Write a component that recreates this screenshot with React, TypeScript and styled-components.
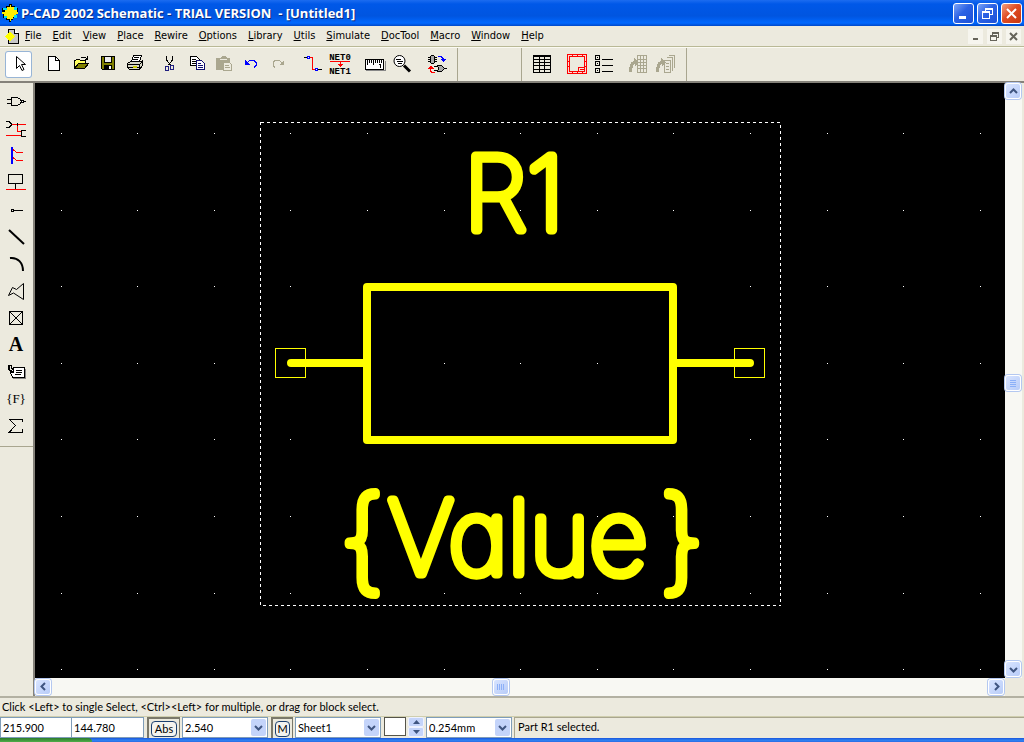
import React from "react";
import styled, { createGlobalStyle, css } from "styled-components";

const face = "#eceade";
const line = "#a9a68f";
const yellow = "#ffff00";
const uiFont = `"DejaVu Sans Condensed", "DejaVu Sans", sans-serif`;
const statusFont = `Lato, "Liberation Sans", sans-serif`;

const GlobalStyle = createGlobalStyle`
  * { box-sizing: border-box; }
  html, body { margin: 0; height: 100%; }
  body { overflow: hidden; background: ${face}; font: 11px/14px ${uiFont}; color: #000; }
  button, input, select { font: inherit; color: inherit; margin: 0; padding: 0; }
`;

const Window = styled.div`
  display: flex;
  flex-direction: column;
  height: 100vh;
  background: ${face};
`;

/* Title bar */

const TitleBar = styled.header`
  display: flex;
  align-items: center;
  flex: none;
  height: 26px;
  padding: 0 2px 0 2px;
  gap: 3px;
  background: linear-gradient(#1c6cf0 0, #0058e8 4px, #0055e0 16px, #0068ff 23px, #0048c8 26px);
`;

const Title = styled.h1`
  flex: 1;
  margin: 0;
  font: bold 13px/20px "Open Sans", sans-serif;
  color: #fff;
  white-space: pre;
  text-shadow: 1px 1px 0 #0a2a80;
`;

const CaptionButton = styled.button<{ $close?: boolean }>`
  display: grid;
  place-items: center;
  width: 21px;
  height: 21px;
  border: 1px solid #fff;
  border-radius: 3px;
  background: ${(p) =>
    p.$close
      ? "linear-gradient(135deg, #f0a080, #e04c24 45%, #c83810)"
      : "linear-gradient(135deg, #7ca4f8, #2c62e4 45%, #1c50d8)"};
`;

/* Menu bar */

const MenuBar = styled.nav`
  display: flex;
  align-items: center;
  flex: none;
  height: 21px;
  padding: 0 3px 0 5px;
  border-bottom: 1px solid #b9b996;
`;

const MenuItems = styled.div`
  display: flex;
  flex: 1;
  gap: 11px;
  padding-left: 5px;
`;

const MenuItem = styled.button`
  border: 0;
  background: none;
  font: 11px/18px ${uiFont};
`;

const AccessKey = styled.u`
  text-decoration: underline;
  text-underline-offset: 1px;
`;

const ChildButtons = styled.div`
  display: flex;
  gap: 4px;
`;

const ChildButton = styled.button`
  display: grid;
  place-items: center;
  width: 15px;
  height: 15px;
  border: 0;
  background: #f6f5ee;
`;

/* Tool bars */

const ToolBar = styled.div`
  display: flex;
  flex: none;
  height: 36px;
  border-top: 1px solid #fbfaf2;
  border-bottom: 2px solid #85827a;
`;

const ToolSection = styled.div<{ $pad?: string }>`
  display: flex;
  align-items: center;
  gap: 8px;
  min-width: 64px;
  padding: ${(p) => p.$pad ?? "0"};
  border-right: 1px solid ${line};
`;

const ToolGroup = styled.div`
  display: flex;
`;

const ToolButton = styled.button<{ $on?: boolean }>`
  width: 27px;
  height: 27px;
  border: 0;
  background: none;
  ${(p) =>
    p.$on &&
    css`
      background: #fff;
      border-radius: 3px;
      box-shadow: inset 0 0 0 1px #98b5d6;
    `}
  svg { display: block; }
`;

const Workspace = styled.main`
  display: flex;
  flex: 1;
  min-height: 0;
`;

const SideBar = styled.aside`
  flex: none;
  width: 35px;
  border-right: 2px solid #85827a;
`;

const SideTools = styled.div`
  display: flex;
  flex-direction: column;
  align-items: flex-start;
  padding: 5px 0 7px 3px;
  border-bottom: 1px solid ${line};
`;

/* Drawing area */

const Sheet = styled.section`
  display: grid;
  flex: 1;
  min-width: 0;
  grid-template-columns: minmax(0, 1fr) 17px;
  grid-template-rows: minmax(0, 1fr) 18px;
  padding-right: 2px;
`;

const Drawing = styled.svg`
  display: block;
  width: 100%;
  height: 100%;
  background: #000;
`;

const DrawnText = styled.text<{ $size: number }>`
  font-family: Inter, Lato, sans-serif;
  font-size: ${(p) => p.$size}px;
  font-weight: 100;
  font-feature-settings: "cv11", "calt" 0;
  fill: ${yellow};
  stroke: ${yellow};
  stroke-width: 9px;
  stroke-linejoin: round;
  stroke-linecap: round;
  text-anchor: middle;
`;

const ScrollBar = styled.div<{ $vertical?: boolean }>`
  display: flex;
  flex-direction: ${(p) => (p.$vertical ? "column" : "row")};
  align-items: center;
  justify-content: space-between;
  padding: 0 1px 1px 0;
  background: #f8f8f3;
`;

const ScrollButton = styled.button`
  display: grid;
  place-items: center;
  flex: none;
  width: 16px;
  height: 16px;
  border: 1px solid #fff;
  border-radius: 3px;
  background: linear-gradient(135deg, #d8e4ff, #b8ccf8);
  box-shadow: 0 0 0 1px #b4c8f0;
`;

const TrackPart = styled.div<{ $share: number }>`
  flex: ${(p) => p.$share} 1 0;
`;

/* Status area */

const Hint = styled.p`
  flex: none;
  height: 21px;
  margin: 0;
  padding: 1px 2px 0;
  border-top: 2px solid #b3b1a2;
  border-bottom: 1px solid #cfceae;
  font: 11px/16px ${statusFont};
`;

const StatusBar = styled.footer`
  display: flex;
  flex: none;
  height: 21px;
  font: 11px/15px ${statusFont};
`;

const Coordinate = styled.input`
  width: 72px;
  border: 1px solid #7f9db9;
  background: #fff;
  padding-left: 2px;
  & + & { border-left: 0; }
`;

const ToggleFrame = styled.div`
  display: flex;
  margin: 0 2px 0 3px;
  padding: 2px 2px 0;
  border: solid #7a786a;
  border-width: 2px 1px 0 2px;
`;

const ToggleButton = styled.button<{ $wide?: boolean }>`
  width: ${(p) => (p.$wide ? 26 : 15)}px;
  height: 16px;
  border: 1px solid #1c4070;
  border-radius: 4px;
  background: #f4f3ee;
  line-height: 14px;
`;

const Combo = styled.div`
  display: grid;
  width: 86px;
  border: 1px solid #7f9db9;
  background: #fff;
  & > * { grid-area: 1 / 1; }
`;

const Select = styled.select`
  appearance: none;
  border: 0;
  padding-left: 2px;
  background: none;
`;

const ComboArrow = styled.span`
  display: grid;
  place-items: center;
  justify-self: end;
  width: 15px;
  margin: 1px;
  border-radius: 2px;
  background: #c4d4fa;
  pointer-events: none;
`;

const Swatch = styled.button`
  width: 22px;
  height: 19px;
  margin: 0 2px 0 3px;
  border: 1px solid #55544a;
  background: #fff;
`;

const Spinner = styled.div`
  display: flex;
  flex-direction: column;
  margin: 0 2px 1px 0;
`;

const SpinButton = styled.button`
  display: grid;
  place-items: center;
  width: 16px;
  height: 10px;
  border: 1px solid #eef2ff;
  border-radius: 2px;
  background: #c4d4fa;
`;

const Message = styled.output`
  flex: 1;
  margin-left: 2px;
  padding: 1px 3px 0;
  border: solid ${line};
  border-width: 1px 0 0 1px;
`;

const TaskBar = styled.div`
  display: flex;
  flex: none;
  height: 4px;
  background: linear-gradient(#1f5fe0 0, #1f5fe0 1px, #2f86f4 2px, #2a6ce4 4px);
`;

const StartEdge = styled.div`
  width: 92px;
  border-top-right-radius: 4px;
  background: linear-gradient(#2c7a2c, #4fae4a);
`;

/* Icons */

type IconProps = { children: React.ReactNode; size?: number; smooth?: boolean };

const Icon = ({ children, size = 27, smooth }: IconProps) => (
  <svg
    width={size}
    height={size}
    viewBox={`0 0 ${size} ${size}`}
    fill="none"
    stroke="#000"
    shapeRendering={smooth ? "auto" : "crispEdges"}
    aria-hidden="true"
  >
    {children}
  </svg>
);

const Chevron = ({ turn = 0 }: { turn?: number }) => (
  <Icon size={9} smooth>
    <path d="M1 3L4.500 6.500L8 3" stroke="#3f5580" strokeWidth="2" transform={`rotate(${turn} 4.500 4.500)`} />
  </Icon>
);

const SmallArrow = ({ up }: { up?: boolean }) => (
  <svg width="7" height="4" viewBox="0 0 7 4" aria-hidden="true">
    <path d={up ? "M0 4L3.500 0L7 4z" : "M0 0L3.500 4L7 0z"} fill="#3f5580" />
  </svg>
);

const AppLogo = () => (
  <svg width="16" height="20" viewBox="0 0 16 20" shapeRendering="crispEdges" aria-hidden="true">
    <path d="M7 1h3v2h3v2h3v6h-2v4h-3v2H9v2H7v-2H4v-2H1v-4h1V9H0V5h4V3h3z" fill="#000" />
    <path d="M8 2h1v2h3v3h3v2h2v2h-3v3h-3v2H9v2H8v-2H5v-3H2v-2H0V9h3V6h2V4h3z" fill="#ffee00" />
    <path d="M1 5h4v2H1zM12 4h3v3h-3zM2 13h3v2H2zM12 12h3v3h-3z" fill="#00e0f0" />
  </svg>
);

const DocLogo = () => (
  <svg width="15" height="15" viewBox="0 0 15 15" shapeRendering="crispEdges" aria-hidden="true">
    <path d="M3.500 .5h6l4 4v10h-10z" fill="#c8c8c8" stroke="#000" />
    <path d="M9.500 .5v4h4" fill="#fff" stroke="#000" />
    <path d="M4.500 2.500l5 5-5 5-5-5z" fill="#ffff00" />
  </svg>
);

const icons = {
  select: <Icon smooth><path d="M11.500 5.500v12l3-3 2.500 5 2-1-2.500-5h4z" fill="#fff" /></Icon>,
  create: <Icon><path d="M8.500 5.500h7l4 4v10h-11z" fill="#fff" /><path d="M15.500 5.500v4h4" /></Icon>,
  open: (
    <Icon>
      <path d="M7.500 17.500v-8h1l1-1h3l1 1h5v3" fill="#ffff60" />
      <path d="M7.500 17.500l4-5h10l-4 5z" fill="#808000" />
      <path d="M14 7l2-1h2l2 2M20.500 5v4M18 8.500h3" />
    </Icon>
  ),
  save: (
    <Icon>
      <path d="M7.500 5.500h13v13h-12l-1-1z" fill="#808000" />
      <path d="M10.500 5.500h7v6h-7z" fill="#eee" />
      <path d="M10 14h8v5h-8z" fill="#000" stroke="none" />
      <path d="M15 15h2v3h-2z" fill="#fff" stroke="none" />
    </Icon>
  ),
  print: (
    <Icon>
      <path d="M10.500 10.500l2-6h8l-2 6z" fill="#fff" />
      <path d="M13 6.500h5M12 8.500h5" />
      <path d="M6.500 12.500l3-2h11l1-1v5l-3 4h-10l-2-2z" fill="#d8d8c8" />
      <path d="M6.500 13.500h12l3-3M18.500 13.500v4M7 16.500h11" />
      <path d="M12 15h3v1h-3z" stroke="#cccc00" />
    </Icon>
  ),
  cut: (
    <Icon>
      <path d="M10.500 5v4l4 5M16.500 5v4l-4 5" />
      <path d="M9.500 15.500h3v4h-3zM14.500 14.500h3v4h-3z" stroke="#202080" />
    </Icon>
  ),
  copy: (
    <Icon>
      <path d="M7.500 5.500h6l3 3v6h-9z" fill="#fff" />
      <path d="M9 8.500h4M9 10.500h5M9 12.500h5" />
      <path d="M13.500 9.500h5l3 3v6h-8z" fill="#fff" stroke="#101070" />
      <path d="M15 12.500h3M15 14.500h5M15 16.500h5" stroke="#101070" />
    </Icon>
  ),
  paste: (
    <Icon>
      <path d="M6 7h4l2-2h3l2 2h3v12H6z" fill="#aaa78f" stroke="none" />
      <path d="M10 8.500h7" stroke="#eceade" />
      <path d="M13.500 11.500h6l2 2v6h-8z" fill="#eceade" stroke="#aaa78f" />
      <path d="M15 14.500h4M15 16.500h5" stroke="#aaa78f" />
    </Icon>
  ),
  undo: (
    <Icon>
      <path d="M8 9v5h5z" fill="#0000ff" stroke="none" />
      <path d="M10 11.500l3-2h4l2 2v3l-2 2" stroke="#0000ff" />
    </Icon>
  ),
  redo: (
    <Icon>
      <path d="M20 9v5h-5z" fill="#aaa78f" stroke="none" />
      <path d="M18 11.500l-3-2h-4l-2 2v3l2 2" stroke="#aaa78f" />
    </Icon>
  ),
  wire: (
    <Icon>
      <path d="M11 6.500h2v12h3" stroke="#ff0000" />
      <path d="M5 6.500h3M19 18.500h4" />
      <path d="M8.500 5.500h2v2h-2zM16.500 17.500h2v2h-2z" fill="#fff" stroke="#0000ff" />
    </Icon>
  ),
  net: (
    <Icon>
      <text x="14" y="9" fontFamily="Liberation Mono, monospace" fontSize="9" fontWeight="bold" textAnchor="middle" fill="#000" stroke="none">NET0</text>
      <text x="14" y="23" fontFamily="Liberation Mono, monospace" fontSize="9" fontWeight="bold" textAnchor="middle" fill="#000" stroke="none">NET1</text>
      <path d="M4 10.500h20M14 10v3" stroke="#ff0000" />
      <path d="M11 13h6l-3 3z" fill="#ff0000" stroke="none" />
    </Icon>
  ),
  ruler: (
    <Icon>
      <path d="M5 19.500h19v-10" stroke="#888" />
      <path d="M4.500 8.500h18v10h-18z" fill="#fff" />
      <path d="M6.500 9v5M8.500 9v3M10.500 9v3M12.500 9v5M14.500 9v3M16.500 9v3M18.500 9v3M20.500 9v3M19.500 13v4M18 13.500h1" />
    </Icon>
  ),
  magnify: (
    <Icon smooth>
      <circle cx="11.500" cy="10" r="5.500" fill="#fff" />
      <path d="M8 8.500h5M9 10.500h6M10 12.500h4" />
      <path d="M16 14.500l6 6" strokeWidth="3" />
    </Icon>
  ),
  swap: (
    <Icon>
      <path d="M7.500 5.500l1-1h2l1 1v6l-1 1h-2l-1-1zM5 6.500h2M5 8.500h2M5 10.500h2M12 6.500h2M12 8.500h2M12 10.500h2" fill="#aaa" />
      <path d="M15 5.500h3l2 2v2" stroke="#0000ff" />
      <path d="M17 8h6l-3 3z" fill="#0000ff" stroke="none" />
      <path d="M7.500 17v3l1 1h3" stroke="#ff0000" />
      <path d="M5 18h6l-3-4z" fill="#ff0000" stroke="none" />
      <path d="M14.500 14.500h4l3 3-3 3h-4l1-3zM11 15.500h3M11 19.500h3M21 17.500h3" fill="#aaa" />
    </Icon>
  ),
  table: (
    <Icon>
      <path d="M4.500 4.500h17v17h-17zM4 5.500h18M4 8.500h18M4 11.500h18M4 14.500h18M4 18.500h18M10.500 5v17M15.500 5v17" />
    </Icon>
  ),
  titles: (
    <Icon>
      <path d="M3.500 3.500h19v19h-19z" fill="#f8dcd4" stroke="#ff0000" />
      <path d="M5.500 5.500h15v15h-15z" fill={face} stroke="#ff0000" />
      <path d="M14 16.500h7M14.500 16v5M16 18.500h5M8.500 3v2M13.500 3v2M18.500 3v2M3 10.500h2M3 15.500h2M21 10.500h2M21 15.500h2M8.500 21v2M13.500 21v2M18.500 21v2" stroke="#ff0000" />
    </Icon>
  ),
  options: (
    <Icon>
      <path d="M4.500 4.500h4v4h-4zM4.500 10.500h4v4h-4zM4.500 17.500h4v4h-4zM6 6.500h1M6 12.500h1M6 19.500h1M11 8.500h11M11 14.500h11M11 20.500h11" />
    </Icon>
  ),
  sheetTable: (
    <Icon>
      <path d="M11.500 4.500h9v17h-9zM11 8.500h10M11 11.500h10M11 14.500h10M11 17.500h10M14.500 5v16M17.500 5v16" stroke="#aaa78f" />
      <path d="M3 21c0-6 1-10 5-11V7l5 4-4 5v-3c-2 1-3 4-3 8z" fill="#aaa78f" stroke="none" />
    </Icon>
  ),
  sheetStack: (
    <Icon>
      <path d="M15.500 4.500h6v12M13.500 6.500h6v13M11.500 9.500h6v12h-6zM19 19.500h1M21 16.500h1M13 12.500h3M13 15.500h3M13 18.500h3" stroke="#aaa78f" />
      <path d="M3 21c0-6 1-10 5-11V7l5 4-4 5v-3c-2 1-3 4-3 8z" fill="#aaa78f" stroke="none" />
    </Icon>
  ),
  part: (
    <Icon>
      <path d="M8.500 9.500h6l3 2 1 2-1 2-3 2h-6zM4 11.500h4M4 15.500h4M21 13.500h2" />
      <path d="M18.500 12.500h2v2h-2z" fill="#fff" />
    </Icon>
  ),
  connect: (
    <Icon>
      <path d="M8 9.500h15M14.500 9v7.500h4M3 20.500h15" stroke="#ff0000" />
      <path d="M3 6.500h3l2 2v2l-2 2H3M23 15.500h-4l-1 1v4l1 1h4M14 8v3" />
    </Icon>
  ),
  bus: (
    <Icon>
      <path d="M10 7.500l4 3h6M10 15.500l4 3h6" stroke="#ff0000" />
      <path d="M9 5v17" stroke="#0000ff" strokeWidth="2" />
    </Icon>
  ),
  port: (
    <Icon>
      <path d="M5.500 5.500h14v9h-14zM12.500 15v5" />
      <path d="M3 20.500h20" stroke="#ff0000" />
    </Icon>
  ),
  pin: <Icon><path d="M8.500 13.500h2v2h-2zM11 14.500h9" /></Icon>,
  line: <Icon smooth><path d="M6 7l15 14" strokeWidth="2" /></Icon>,
  arc: <Icon smooth><path d="M7 8c8-1 13 5 13 13" strokeWidth="2" /></Icon>,
  polygon: <Icon smooth><path d="M5.500 18.500l4-8 4 2 7-6v16l-10-6.500z" /></Icon>,
  point: <Icon><path d="M6.500 7.500h13v13h-13zM6.500 7.500l13 13M19.500 7.500l-13 13" /></Icon>,
  text: (
    <Icon>
      <text x="13" y="20" fontFamily="Liberation Serif, serif" fontWeight="bold" fontSize="20" textAnchor="middle" fill="#000" stroke="none">A</text>
    </Icon>
  ),
  attribute: (
    <Icon>
      <path d="M10 20.500h12.500v-10" stroke="#888" />
      <path d="M7.500 14.500l3-5h11v10h-12z" fill="#fff" />
      <path d="M13 12.500h6M13 14.500h6M12 16.500h6" />
      <path d="M5 7h3v3h2v3H8l-2-1-1-2z" strokeWidth="1" />
      <path d="M5 8h2v4H5zM8 13h3v2H8z" fill="#000" stroke="none" />
    </Icon>
  ),
  field: (
    <Icon>
      <text x="13" y="18" fontFamily="Liberation Serif, serif" fontSize="13" textAnchor="middle" fill="#000" stroke="none">{"{F}"}</text>
    </Icon>
  ),
  formula: <Icon><path d="M19.500 10v-2.500h-13l6 6-6 6.500h13v-3" /></Icon>,
};

type Tool = [keyof typeof icons, string];

const editGroups: Tool[][] = [
  [["select", "Select"]],
  [["create", "New"], ["open", "Open"], ["save", "Save"], ["print", "Print"]],
  [["cut", "Cut"], ["copy", "Copy"], ["paste", "Paste"], ["undo", "Undo"], ["redo", "Redo"]],
  [["wire", "Rewire manual"], ["net", "Rename net"]],
  [["ruler", "Measure"], ["magnify", "Zoom window"]],
  [["swap", "Record ECOs"]],
];

const docGroups: Tool[][] = [
  [["table", "Place table"]],
  [["titles", "Titles"], ["options", "Notes"]],
  [["sheetTable", "Update table"], ["sheetStack", "Update all"]],
];

const placeTools: Tool[] = [
  ["part", "Place part"],
  ["connect", "Place wire"],
  ["bus", "Place bus"],
  ["port", "Place port"],
  ["pin", "Place pin"],
  ["line", "Place line"],
  ["arc", "Place arc"],
  ["polygon", "Place polygon"],
  ["point", "Place reference point"],
  ["text", "Place text"],
  ["attribute", "Place attribute"],
  ["field", "Place field"],
  ["formula", "Place IEEE symbol"],
];

const menus = [
  "File", "Edit", "View", "Place", "Rewire", "Options", "Library",
  "Utils", "Simulate", "DocTool", "Macro", "Window", "Help",
];

const Groups = ({ groups }: { groups: Tool[][] }) => (
  <>
    {groups.map((group) => (
      <ToolGroup key={group[0][0]}>
        {group.map(([icon, label]) => (
          <ToolButton key={icon} $on={icon === "select"} aria-label={label}>
            {icons[icon]}
          </ToolButton>
        ))}
      </ToolGroup>
    ))}
  </>
);

const gridColumns = Array.from({ length: 40 }, (_, i) => 26 + Math.floor(i * 76.6));
const gridRows = Array.from({ length: 30 }, (_, i) => 50 + Math.round(i * 76.6));

const Schematic = () => (
  <Drawing role="img" aria-label="Resistor R1 with its value">
    <g fill="#fff" shapeRendering="crispEdges">
      {gridRows.map((y) =>
        gridColumns.map((x) => <rect key={`${x}-${y}`} x={x} y={y} width="1" height="1" />)
      )}
    </g>
    <rect x="225.5" y="39.5" width="520" height="483" fill="none" stroke="#fff" strokeDasharray="3 3" shapeRendering="crispEdges" />
    <g fill="none" stroke={yellow} strokeWidth="8" strokeLinecap="round" strokeLinejoin="round">
      <rect x="332" y="204" width="306" height="153" />
      <path d="M256 280H332M638 280H715" />
    </g>
    <g fill="none" stroke={yellow} shapeRendering="crispEdges">
      <rect x="240.5" y="265.5" width="30" height="29" />
      <rect x="699.5" y="265.5" width="30" height="29" />
    </g>
    <DrawnText x="479" y="147" $size={102}>R1</DrawnText>
    <DrawnText x="327" y="496" $size={112}>{"{"}</DrawnText>
    <DrawnText x="483" y="491" $size={102}>Value</DrawnText>
    <DrawnText x="647" y="496" $size={112}>{"}"}</DrawnText>
  </Drawing>
);

type ComboBoxProps = { label: string; value: string };

const ComboBox = ({ label, value }: ComboBoxProps) => (
  <Combo>
    <Select aria-label={label} defaultValue={value}>
      <option>{value}</option>
    </Select>
    <ComboArrow><Chevron /></ComboArrow>
  </Combo>
);

export default function App() {
  return (
    <Window>
      <GlobalStyle />
      <TitleBar>
        <AppLogo />
        <Title>{"P-CAD 2002 Schematic - TRIAL VERSION  - [Untitled1]"}</Title>
        <CaptionButton aria-label="Minimize">
          <Icon size={15}><path d="M3 11.500h7" stroke="#fff" strokeWidth="3" /></Icon>
        </CaptionButton>
        <CaptionButton aria-label="Restore">
          <Icon size={15}>
            <path d="M5.500 5V2.500h7v6H10" stroke="#fff" />
            <path d="M5 3.500h8M2 6.500h8" stroke="#fff" />
            <path d="M2.500 5.500h7v7h-7z" stroke="#fff" />
          </Icon>
        </CaptionButton>
        <CaptionButton $close aria-label="Close">
          <Icon size={15} smooth><path d="M3 3l9 9M12 3l-9 9" stroke="#fff" strokeWidth="2" /></Icon>
        </CaptionButton>
      </TitleBar>

      <MenuBar>
        <DocLogo />
        <MenuItems>
          {menus.map((name) => (
            <MenuItem key={name}><AccessKey>{name[0]}</AccessKey>{name.slice(1)}</MenuItem>
          ))}
        </MenuItems>
        <ChildButtons>
          <ChildButton aria-label="Minimize drawing">
            <Icon size={11}><path d="M3 8h5" stroke="#66645a" strokeWidth="2" /></Icon>
          </ChildButton>
          <ChildButton aria-label="Restore drawing">
            <Icon size={11}><path d="M3.500 4V1.500h6v5H8M3 2.500h7M1.500 4.500h6v5h-6zM1 5.500h7" stroke="#66645a" /></Icon>
          </ChildButton>
          <ChildButton aria-label="Close drawing">
            <Icon size={11} smooth><path d="M2 2l7 7M9 2l-7 7" stroke="#66645a" strokeWidth="2" /></Icon>
          </ChildButton>
        </ChildButtons>
      </MenuBar>

      <ToolBar>
        <ToolSection $pad="0 7px 0 5px"><Groups groups={editGroups} /></ToolSection>
        <ToolSection />
        <ToolSection $pad="0 6px 0 7px"><Groups groups={docGroups} /></ToolSection>
      </ToolBar>

      <Workspace>
        <SideBar>
          <SideTools>
            {placeTools.map(([icon, label]) => (
              <ToolButton key={icon} aria-label={label}>{icons[icon]}</ToolButton>
            ))}
          </SideTools>
        </SideBar>
        <Sheet>
          <Schematic />
          <ScrollBar $vertical>
            <ScrollButton aria-label="Scroll up"><Chevron turn={180} /></ScrollButton>
            <TrackPart $share={101} />
            <ScrollButton aria-label="Vertical position">
              <Icon size={8}><path d="M1 1.500h6M1 3.500h6M1 5.500h6M1 7.500h6" stroke="#8cb0f8" /></Icon>
            </ScrollButton>
            <TrackPart $share={99} />
            <ScrollButton aria-label="Scroll down"><Chevron /></ScrollButton>
          </ScrollBar>
          <ScrollBar>
            <ScrollButton aria-label="Scroll left"><Chevron turn={90} /></ScrollButton>
            <TrackPart $share={48} />
            <ScrollButton aria-label="Horizontal position">
              <Icon size={8}><path d="M.5 1v6M2.500 1v6M4.500 1v6M6.500 1v6" stroke="#8cb0f8" /></Icon>
            </ScrollButton>
            <TrackPart $share={52} />
            <ScrollButton aria-label="Scroll right"><Chevron turn={270} /></ScrollButton>
          </ScrollBar>
        </Sheet>
      </Workspace>

      <Hint>{"Click <Left> to single Select, <Ctrl><Left> for multiple, or drag for block select."}</Hint>

      <StatusBar>
        <Coordinate aria-label="X coordinate" defaultValue="215.900" />
        <Coordinate aria-label="Y coordinate" defaultValue="144.780" />
        <ToggleFrame><ToggleButton $wide>Abs</ToggleButton></ToggleFrame>
        <ComboBox label="Grid" value="2.540" />
        <ToggleFrame><ToggleButton>M</ToggleButton></ToggleFrame>
        <ComboBox label="Sheet" value="Sheet1" />
        <Swatch aria-label="Color" />
        <Spinner>
          <SpinButton aria-label="Next sheet"><SmallArrow up /></SpinButton>
          <SpinButton aria-label="Previous sheet"><SmallArrow /></SpinButton>
        </Spinner>
        <ComboBox label="Line width" value="0.254mm" />
        <Message>Part R1 selected.</Message>
      </StatusBar>

      <TaskBar><StartEdge /></TaskBar>
    </Window>
  );
}
